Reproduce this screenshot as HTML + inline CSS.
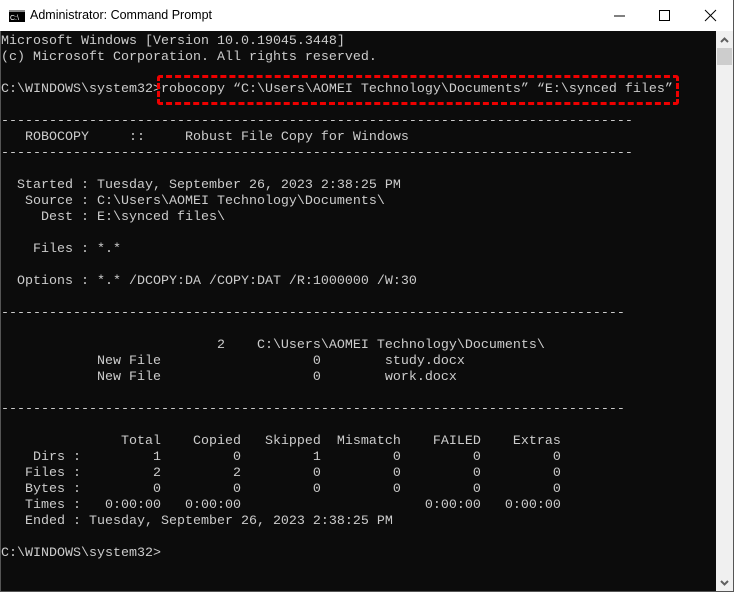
<!DOCTYPE html>
<html><head><meta charset="utf-8"><style>
html,body{margin:0;padding:0;}
body{width:734px;height:592px;position:relative;overflow:hidden;background:#fff;font-family:"Liberation Sans",sans-serif;}
#title{position:absolute;left:0;top:0;width:734px;height:31px;background:#fff;}
#title .t{position:absolute;left:30px;top:8px;font-size:12.5px;color:#000;}
#con{position:absolute;left:1px;top:31px;width:715px;height:560px;background:#0c0c0c;}
pre{margin:0;position:absolute;left:0;top:3px;font-family:"Liberation Mono",monospace;font-size:13.33px;letter-spacing:0px;line-height:16px;color:#cccccc;white-space:pre;}
#sb{position:absolute;left:716px;top:31px;width:17px;height:560px;background:#f0f0f0;}
#box{position:absolute;left:157px;top:75px;width:516px;height:24px;border:3px dashed #e00;border-radius:3px;}
</style></head><body>
<div id="title">
<svg style="position:absolute;left:9px;top:10px" width="16" height="12"><rect x="0" y="0" width="16" height="12" fill="#000"/><rect x="0" y="0" width="16" height="2" fill="#888"/><text x="1" y="10" font-size="7" fill="#fff" font-family="Liberation Sans">C:\</text></svg>
<div class="t">Administrator: Command Prompt</div>
<svg style="position:absolute;left:612px;top:8px" width="120" height="16"><line x1="2" y1="8" x2="13" y2="8" stroke="#000"/><rect x="47.5" y="2.5" width="10" height="10" fill="none" stroke="#000"/><line x1="93" y1="2" x2="104" y2="13" stroke="#000"/><line x1="104" y1="2" x2="93" y2="13" stroke="#000"/></svg>
</div>
<div style="position:absolute;left:0;top:31px;width:1px;height:561px;background:#555"></div>
<div id="con"><pre>Microsoft Windows [Version 10.0.19045.3448]
(c) Microsoft Corporation. All rights reserved.

C:\WINDOWS\system32>robocopy “C:\Users\AOMEI Technology\Documents” “E:\synced files”

-------------------------------------------------------------------------------
   ROBOCOPY     ::     Robust File Copy for Windows
-------------------------------------------------------------------------------

  Started : Tuesday, September 26, 2023 2:38:25 PM
   Source : C:\Users\AOMEI Technology\Documents\
     Dest : E:\synced files\

    Files : *.*

  Options : *.* /DCOPY:DA /COPY:DAT /R:1000000 /W:30

------------------------------------------------------------------------------

                           2    C:\Users\AOMEI Technology\Documents\
            New File                   0        study.docx
            New File                   0        work.docx

------------------------------------------------------------------------------

               Total    Copied   Skipped  Mismatch    FAILED    Extras
    Dirs :         1         0         1         0         0         0
   Files :         2         2         0         0         0         0
   Bytes :         0         0         0         0         0         0
   Times :   0:00:00   0:00:00                       0:00:00   0:00:00
   Ended : Tuesday, September 26, 2023 2:38:25 PM

C:\WINDOWS\system32></pre></div>
<div id="box"></div>
<div id="sb">
<svg style="position:absolute;left:4px;top:6px" width="9" height="6"><polyline points="1,5 4.5,1.5 8,5" fill="none" stroke="#606060" stroke-width="2"/></svg>
<div style="position:absolute;left:1px;top:17px;width:15px;height:17px;background:#cdcdcd"></div>
<svg style="position:absolute;left:4px;top:549px" width="9" height="6"><polyline points="1,1 4.5,4.5 8,1" fill="none" stroke="#606060" stroke-width="2"/></svg>
</div>
<div style="position:absolute;left:733px;top:0;width:1px;height:592px;background:#555"></div>
<div style="position:absolute;left:0;top:591px;width:734px;height:1px;background:#555"></div>
</body></html>
